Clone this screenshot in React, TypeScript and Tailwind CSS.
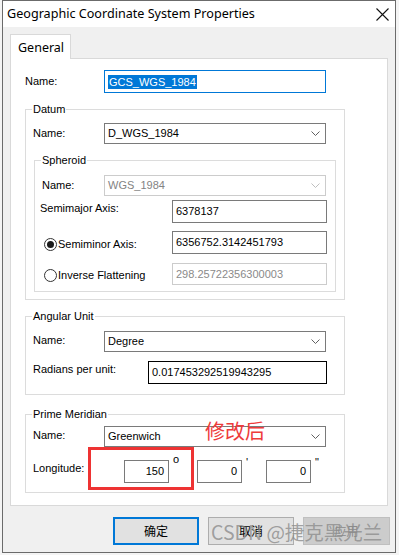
import React from "react";

const lbl = "text-[11px] leading-[13px] text-black whitespace-nowrap";

function Combo({ value, disabled = false }: { value: string; disabled?: boolean }) {
  return (
    <div
      className={`w-[222px] h-[21px] bg-white border flex items-center justify-between pl-[3px] pr-[5px] ${
        disabled ? "border-[#cccccc] text-[#838383]" : "border-[#7a7a7a] text-black"
      }`}
    >
      <span className="text-[11px] leading-[13px]">{value}</span>
      <svg width="9" height="6" viewBox="0 0 9 6" className="mt-[1px]">
        <path d="M0.5 0.5 L4.5 4.5 L8.5 0.5" fill="none" stroke={disabled ? "#bfbfbf" : "#606060"} strokeWidth="1" />
      </svg>
    </div>
  );
}

function TextBox({
  value,
  w,
  h = 23,
  disabled = false,
  black = false,
  right = false,
}: {
  value: string;
  w: string;
  h?: number;
  disabled?: boolean;
  black?: boolean;
  right?: boolean;
}) {
  return (
    <div
      className={`${w} ${h === 23 ? "h-[23px]" : "h-[22px]"} bg-white border flex items-center px-[3px] ${
        right ? "justify-end pr-[4px]" : ""
      } ${disabled ? "border-[#cccccc] text-[#8a8a8a]" : black ? "border-black text-black" : "border-[#7a7a7a] text-black"}`}
    >
      <span className="text-[11px] leading-[13px]">{value}</span>
    </div>
  );
}

function Radio({ checked }: { checked: boolean }) {
  return (
    <div className="w-[13px] h-[13px] rounded-full border border-[#333333] bg-white flex items-center justify-center shrink-0">
      {checked && <div className="w-[7px] h-[7px] rounded-full bg-[#1a1a1a]" />}
    </div>
  );
}

export default function App() {
  return (
    <div className="w-[399px] h-[555px] bg-[#f4f4f4] overflow-hidden font-['Liberation_Sans',Arial,sans-serif]">
      <div className="ml-[2px] w-[394px] h-[553px] border border-[#6b6b6b] bg-[#f0f0f0] flex flex-col relative">
        {/* title bar */}
        <div className="h-[26px] bg-white flex items-center justify-between pl-[4px] pr-[6px] shrink-0">
          <span className="text-[12.6px] leading-[18px] text-black font-['Noto_Sans',sans-serif]">
            Geographic Coordinate System Properties
          </span>
          <svg width="13" height="13" viewBox="0 0 13 13">
            <path d="M0.5 0.5 L12.5 12.5 M12.5 0.5 L0.5 12.5" stroke="#111" strokeWidth="1.1" />
          </svg>
        </div>

        {/* body */}
        <div className="flex-1 pl-[7px] pt-[7px] flex flex-col">
          <div className="w-[61px] h-[25px] bg-white border border-b-0 border-[#d9d9d9] relative z-10 -mb-px flex items-center pl-[7px]">
            <span className="text-[12.5px] leading-[15px] text-black font-['Noto_Sans',sans-serif]">General</span>
          </div>
          <div className="w-[378px] h-[448px] bg-white border border-[#d9d9d9] pl-[14px] relative flex flex-col">
            {/* Name */}
            <div className="flex items-center mt-[11px]">
              <span className={`${lbl} w-[79px]`}>Name:</span>
              <div className="w-[222px] h-[23px] border border-[#0078d7] bg-white flex items-center pl-[3px]">
                <span className="text-[11px] leading-[14px] bg-[#0078d7] text-white px-[1px]">GCS_WGS_1984</span>
              </div>
            </div>

            {/* Datum */}
            <fieldset className="mt-[10px] w-[320px] border border-[#dcdcdc] pl-[7px] pb-[7px]">
              <legend className={`${lbl} px-[1px] -ml-[1px]`}>Datum</legend>
              <div className="flex items-center mt-[7px]">
                <span className={`${lbl} w-[71px]`}>Name:</span>
                <Combo value="D_WGS_1984" />
              </div>
              <fieldset className="mt-[10px] ml-[1px] w-[302px] border border-[#dcdcdc] pl-[7px] pb-[6px]">
                <legend className={`${lbl} px-[1px] -ml-[1px]`}>Spheroid</legend>
                <div className="flex items-center mt-[8px]">
                  <span className={`${lbl} w-[62px]`}>Name:</span>
                  <Combo value="WGS_1984" disabled />
                </div>
                <div className="flex items-center mt-[4px] -ml-[2px]">
                  <span className={`${lbl} w-[132px] -mt-[6px]`}>Semimajor Axis:</span>
                  <TextBox value="6378137" w="w-[155px]" />
                </div>
                <div className="flex items-center mt-[8px]">
                  <div className="w-[130px] flex items-center pl-[2px] mt-[3px]">
                    <Radio checked />
                    <span className={`${lbl} ml-[1px]`}>Semiminor Axis:</span>
                  </div>
                  <TextBox value="6356752.3142451793" w="w-[155px]" />
                </div>
                <div className="flex items-center mt-[9px]">
                  <div className="w-[130px] flex items-center pl-[2px] mt-[3px]">
                    <Radio checked={false} />
                    <span className={`${lbl} ml-[1px]`}>Inverse Flattening</span>
                  </div>
                  <TextBox value="298.25722356300003" w="w-[155px]" h={22} disabled />
                </div>
              </fieldset>
            </fieldset>

            {/* Angular Unit */}
            <fieldset className="mt-[10px] w-[320px] border border-[#dcdcdc] pl-[7px] pb-[10px]">
              <legend className={`${lbl} px-[1px] -ml-[1px]`}>Angular Unit</legend>
              <div className="flex items-center mt-[8px]">
                <span className={`${lbl} w-[71px] -mt-[3px]`}>Name:</span>
                <Combo value="Degree" />
              </div>
              <div className="flex items-center mt-[9px]">
                <span className={`${lbl} w-[115px] -mt-[6px]`}>Radians per unit:</span>
                <TextBox value="0.017453292519943295" w="w-[179px]" black />
              </div>
            </fieldset>

            {/* Prime Meridian */}
            <fieldset className="mt-[13px] w-[320px] border border-[#dcdcdc] pl-[7px] pb-[9px]">
              <legend className={`${lbl} px-[1px] -ml-[1px]`}>Prime Meridian</legend>
              <div className="flex items-center mt-[5px]">
                <span className={`${lbl} w-[71px] -mt-[2px]`}>Name:</span>
                <Combo value="Greenwich" />
              </div>
              <div className="flex items-center mt-[13px]">
                <span className={`${lbl} w-[91px] -mt-[6px]`}>Longitude:</span>
                <TextBox value="150" w="w-[45px]" right />
                <span className="w-[28px] self-start -mt-[7px] pl-[4px] text-[11px] leading-[13px]">o</span>
                <TextBox value="0" w="w-[45px]" right />
                <span className="w-[24px] self-start -mt-[4px] pl-[4px] text-[11px] leading-[13px]">'</span>
                <TextBox value="0" w="w-[45px]" right />
                <span className="self-start -mt-[4px] pl-[4px] text-[11px] leading-[13px] text-black">"</span>
              </div>
            </fieldset>

            {/* annotations */}
            <div className="absolute left-[77px] top-[388px] w-[106px] h-[43px] border-[3px] border-[#ee3333]" />
            <div className="absolute left-[194px] top-[360px] text-[20px] leading-[24px] text-[#ee3b3b] font-['Noto_Sans_CJK_SC',sans-serif]">
              修改后
            </div>
          </div>

          {/* buttons */}
          <div className="flex justify-end gap-[9px] mt-[11px] pr-[5px]">
            <div className="w-[86px] h-[28px] bg-[#e1e1e1] border-2 border-[#0078d7] flex items-center justify-center text-[12px] font-['Noto_Sans_CJK_SC',sans-serif]">
              确定
            </div>
            <div className="w-[86px] h-[28px] bg-[#e1e1e1] border border-[#adadad] flex items-center justify-center text-[12px] font-['Noto_Sans_CJK_SC',sans-serif]">
              取消
            </div>
            <div className="w-[87px] h-[28px] bg-[#cccccc] border border-[#bfbfbf] flex items-center justify-center text-[12px] text-[#8b8b8b] font-['Noto_Sans_CJK_SC',sans-serif]">
              应用
            </div>
          </div>
        </div>

        {/* watermark */}
        <div className="absolute left-[208px] top-[518px] text-[19.5px] leading-[26px] text-[#8c8c8c]/80 font-['Noto_Sans_CJK_SC',sans-serif] whitespace-nowrap">
          CSDN @捷克黑光兰
        </div>
      </div>
    </div>
  );
}
